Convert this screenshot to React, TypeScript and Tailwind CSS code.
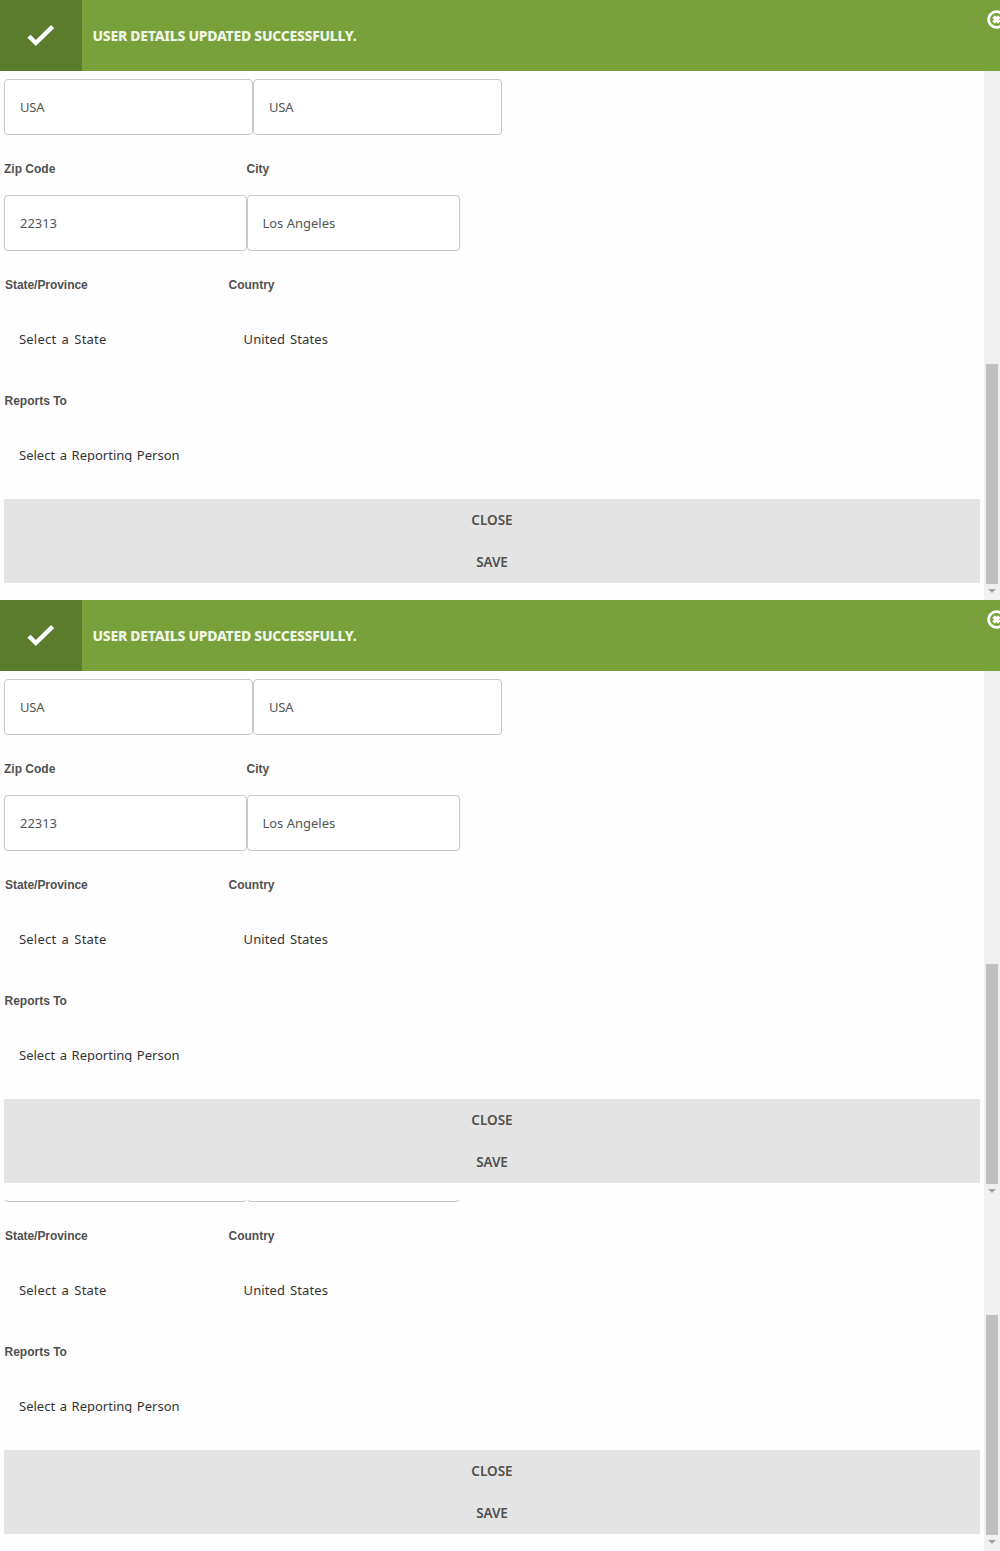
import React from 'react';

const bodyFont = "font-['Noto_Sans',sans-serif] text-[13px]";

function Label({ className, children }: { className: string; children: string }) {
  return (
    <span className={`block shrink-0 whitespace-nowrap font-['Liberation_Sans',sans-serif] text-[12px] font-bold leading-4 text-[#505050] ${className}`}>
      {children}
    </span>
  );
}

function Field({ width, spacing, children }: { width: string; spacing: string; children: string }) {
  return (
    <div className={`flex h-14 shrink-0 items-center rounded border border-[#c8c8c8] bg-white pt-[2px] pl-[15px] text-[#555] ${bodyFont} ${width}`}>
      <span className={`whitespace-nowrap ${spacing}`}>{children}</span>
    </div>
  );
}

function Notice() {
  return (
    <header className="flex h-[71px] shrink-0 overflow-hidden bg-[#78a13b]">
      <div className="flex w-[82px] items-center justify-center bg-[#5b7c2d]">
        <svg width="28" height="24" viewBox="0 0 28 24" fill="none" className="shrink-0">
          <path d="M2 12.2L8.8 19L25.6 2.6" stroke="#fff" strokeWidth="4.4" />
        </svg>
      </div>
      <div className="flex flex-1 items-center pl-[10.5px]">
        <span className="whitespace-nowrap font-['Noto_Sans',sans-serif] text-[14px] font-extrabold tracking-[-0.28px] text-[#f0f5e8]">
          USER DETAILS UPDATED SUCCESSFULLY.
        </span>
      </div>
      <div className="w-[13px] overflow-hidden pt-[10px]">
        <svg width="19" height="19" viewBox="0 0 19 19" fill="none">
          <circle cx="9.5" cy="9.5" r="7.9" stroke="#fff" strokeWidth="2.8" />
          <path d="M6.6 6.6L12.4 12.4M12.4 6.6L6.6 12.4" stroke="#fff" strokeWidth="3.6" />
        </svg>
      </div>
    </header>
  );
}

function Form() {
  return (
    <div className="flex w-[984px] shrink-0 flex-col pl-1 pr-1 pt-2 pb-[17px]">
      <div className="flex">
        <Field width="w-[249px]" spacing="tracking-[-0.25px]">USA</Field>
        <Field width="w-[249px]" spacing="tracking-[-0.25px]">USA</Field>
      </div>
      <div className="flex h-[60px] items-center pt-[7px]">
        <Label className="w-[242.5px]">Zip Code</Label>
        <Label className="w-[200px]">City</Label>
      </div>
      <div className="flex">
        <Field width="w-[243px]" spacing="tracking-[-0.05px]">22313</Field>
        <Field width="w-[213px]" spacing="-ml-[0.6px]">Los Angeles</Field>
      </div>
      <div className="flex h-[60px] items-center pt-[7px] pl-px">
        <Label className="w-[223.5px] tracking-[-0.05px]">State/Province</Label>
        <Label className="w-[200px]">Country</Label>
      </div>
      <div className={`flex h-14 items-center pt-[2px] pl-[15px] text-[#333] ${bodyFont}`}>
        <span className="w-[224.6px] tracking-[0.2px] [word-spacing:1.7px]">Select a State</span>
        <span className="tracking-[0.1px] [word-spacing:1.5px]">United States</span>
      </div>
      <div className="flex h-[60px] items-center pt-[7px]">
        <Label className="w-[200px] pl-[0.5px]">Reports To</Label>
      </div>
      <div className={`flex h-14 items-center pl-[15px] text-[#333] ${bodyFont}`}>
        <span className="h-[14px] overflow-hidden whitespace-nowrap leading-[14px] [word-spacing:1.2px]">Select a Reporting Person</span>
      </div>
      <div className="mt-4 flex flex-col bg-[#e4e4e4] font-['Noto_Sans',sans-serif] text-[13.5px] font-semibold text-[#505050]">
        <button className="h-[42px]">CLOSE</button>
        <button className="h-[42px] tracking-[-0.1px]">SAVE</button>
      </div>
    </div>
  );
}

function Scrollbar() {
  return (
    <div className="flex w-4 shrink-0 flex-col items-center justify-end bg-[#f0f0f0]">
      <div className="h-[220px] w-3 bg-[#c0c0c0]" />
      <div className="flex h-4 items-center justify-center">
        <svg width="8" height="4" viewBox="0 0 8 4" className="-mt-[2px]">
          <path d="M0 0H8L4 4Z" fill="#a3a3a3" />
        </svg>
      </div>
    </div>
  );
}

function Panel({ notice = true }: { notice?: boolean }) {
  return (
    <section className={`flex flex-col overflow-hidden ${notice ? 'h-[600px]' : 'h-[351px]'}`}>
      {notice && <Notice />}
      <div className="flex min-h-0 flex-1">
        <div className="flex flex-1 flex-col justify-end overflow-hidden">
          <Form />
        </div>
        <Scrollbar />
      </div>
    </section>
  );
}

export default function App() {
  return (
    <main className="w-[1000px] bg-[#fefefe]">
      <Panel />
      <Panel />
      <Panel notice={false} />
    </main>
  );
}
